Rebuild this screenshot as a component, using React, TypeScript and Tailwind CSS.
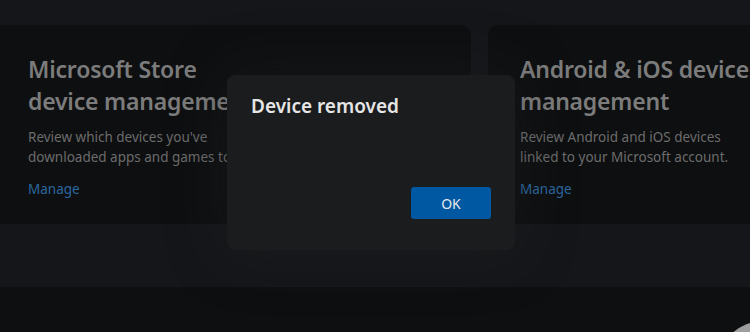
import React from "react";

const font = { fontFamily: '"Noto Sans", "Open Sans", sans-serif' };

function Card({ title1, title2, line1, line2, className }: { title1: string; title2: string; line1: string; line2: string; className: string }) {
  return (
    <div className={`shrink-0 h-[199px] rounded-[10px] bg-[#0e0f10] pt-[28px] ${className}`}>
      <h2 className="text-[23px] leading-[32px] font-semibold text-[#7c7c7c] whitespace-nowrap tracking-[-0.2px]">
        {title1}
        <br />
        {title2}
      </h2>
      <p className="mt-[10px] text-[13.5px] leading-[20px] text-[#6c6c6c] whitespace-nowrap">
        {line1}
        <br />
        {line2}
      </p>
      <a className="block mt-[12px] text-[13.5px] leading-[20px] text-[#2b68a0]">Manage</a>
    </div>
  );
}

export default function App() {
  return (
    <div className="relative w-[750px] h-[332px] overflow-hidden bg-[#0e0f10]" style={font}>
      <div className="bg-[#151619] h-[287px] pt-[25px]">
        <div className="flex gap-[17px] ml-[-20px]">
          <Card
            className="w-[491px] pl-[48px]"
            title1="Microsoft Store"
            title2="device management"
            line1="Review which devices you've"
            line2="downloaded apps and games to."
          />
          <Card
            className="w-[491px] pl-[32px]"
            title1="Android & iOS devices"
            title2="management"
            line1="Review Android and iOS devices"
            line2="linked to your Microsoft account."
          />
        </div>
      </div>
      <div className="absolute left-[718px] top-[321px] w-[90px] h-[90px] rounded-full bg-[#9d9d9d]" />
      <div className="absolute left-[227px] top-[75px] w-[288px] h-[175px] rounded-[8px] bg-[#1b1c1e] shadow-[0_0_60px_rgba(40,40,44,0.35)] flex flex-col">
        <div className="pl-[24px] pt-[18px] text-[19px] leading-[26px] font-semibold text-[#e6e6e6]">Device removed</div>
        <div className="flex-1" />
        <div className="flex justify-end pr-[24px] pb-[31px]">
          <button className="w-[80px] h-[32px] rounded-[3px] bg-[#0058a3] text-[14px] text-[#e8e8e8]">OK</button>
        </div>
      </div>
    </div>
  );
}
